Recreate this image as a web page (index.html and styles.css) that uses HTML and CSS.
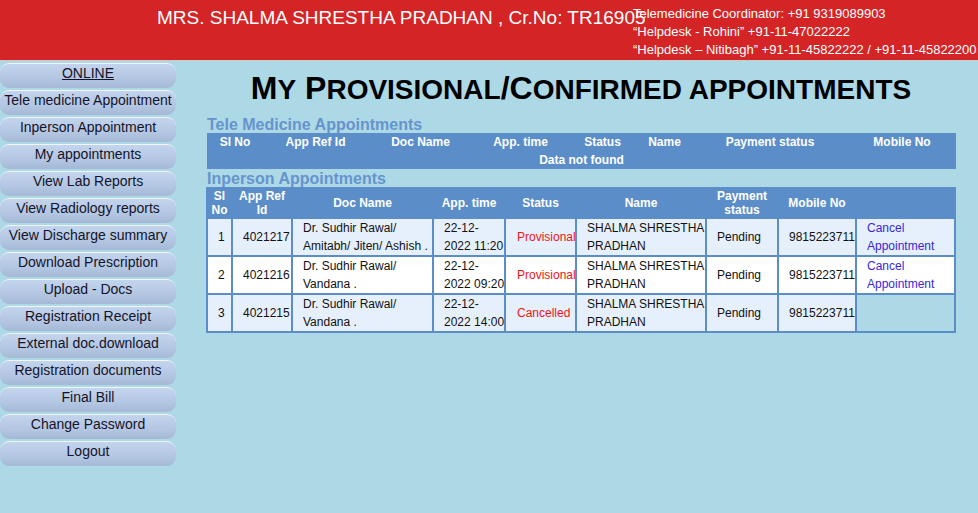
FILE: index.html
```
<!DOCTYPE html>
<html>
<head>
<meta charset="utf-8">
<title>My appointments</title>
<link rel="stylesheet" href="styles.css">
</head>
<body>
<header class="topbar">
  <div class="patient">MRS. SHALMA SHRESTHA PRADHAN , Cr.No: TR16905</div>
  <div class="contacts">Telemedicine Coordinator: +91 9319089903<br>“Helpdesk - Rohini” +91-11-47022222<br>“Helpdesk – Nitibagh” +91-11-45822222 / +91-11-45822200</div>
</header>
<div class="layout">
  <nav class="sidebar">
    <a class="navbtn navbtn-online" href="#">ONLINE</a>
    <a class="navbtn" href="#">Tele medicine Appointment</a>
    <a class="navbtn" href="#">Inperson Appointment</a>
    <a class="navbtn" href="#">My appointments</a>
    <a class="navbtn" href="#">View Lab Reports</a>
    <a class="navbtn" href="#">View Radiology reports</a>
    <a class="navbtn" href="#">View Discharge summary</a>
    <a class="navbtn" href="#">Download Prescription</a>
    <a class="navbtn" href="#">Upload - Docs</a>
    <a class="navbtn" href="#">Registration Receipt</a>
    <a class="navbtn" href="#">External doc.download</a>
    <a class="navbtn" href="#">Registration documents</a>
    <a class="navbtn" href="#">Final Bill</a>
    <a class="navbtn" href="#">Change Password</a>
    <a class="navbtn" href="#">Logout</a>
  </nav>
  <main class="content">
    <h1 class="title">M<span class="sc">y</span> P<span class="sc">rovisional</span>/C<span class="sc">onfirmed appointments</span></h1>
    <h2 class="section">Tele Medicine Appointments</h2>
    <table class="tele">
      <colgroup>
        <col class="t1"><col class="t2"><col class="t3"><col class="t4"><col class="t5"><col class="t6"><col class="t7"><col class="t8">
      </colgroup>
      <tr>
        <th>Sl No</th><th>App Ref Id</th><th>Doc Name</th><th>App. time</th><th>Status</th><th>Name</th><th>Payment status</th><th>Mobile No</th>
      </tr>
      <tr>
        <td colspan="8">Data not found</td>
      </tr>
    </table>
    <h2 class="section section-inperson">Inperson Appointments</h2>
    <table class="appts">
      <colgroup>
        <col class="c1"><col class="c2"><col class="c3"><col class="c4"><col class="c5"><col class="c6"><col class="c7"><col class="c8"><col class="c9">
      </colgroup>
      <tr class="head">
        <th>Sl No</th><th>App Ref Id</th><th>Doc Name</th><th>App. time</th><th>Status</th><th>Name</th><th>Payment status</th><th>Mobile No</th><th></th>
      </tr>
      <tr class="odd">
        <td>1</td><td>4021217</td><td>Dr. Sudhir Rawal/<br>Amitabh/ Jiten/ Ashish .</td><td>22-12-<br>2022 11:20</td><td class="st">Provisional</td><td>SHALMA SHRESTHA<br>PRADHAN</td><td>Pending</td><td>9815223711</td><td><a class="cancel" href="#">Cancel<br>Appointment</a></td>
      </tr>
      <tr class="even">
        <td>2</td><td>4021216</td><td>Dr. Sudhir Rawal/<br>Vandana .</td><td>22-12-<br>2022 09:20</td><td class="st">Provisional</td><td>SHALMA SHRESTHA<br>PRADHAN</td><td>Pending</td><td>9815223711</td><td><a class="cancel" href="#">Cancel<br>Appointment</a></td>
      </tr>
      <tr class="odd">
        <td>3</td><td>4021215</td><td>Dr. Sudhir Rawal/<br>Vandana .</td><td>22-12-<br>2022 14:00</td><td class="st">Cancelled</td><td>SHALMA SHRESTHA<br>PRADHAN</td><td>Pending</td><td>9815223711</td><td class="empty"></td>
      </tr>
    </table>
  </main>
</div>
</body>
</html>
```
FILE: styles.css
```
* { box-sizing: border-box; }
html, body { margin: 0; padding: 0; }
body {
  background: #add8e6;
  font-family: "Liberation Sans", Arial, sans-serif;
  color: #000;
  height: 513px;
  overflow: hidden;
}

.topbar {
  position: relative;
  height: 61px;
  background: #d42426;
  border-bottom: 1px solid #c9c9c9;
  color: #fff;
}
.patient {
  padding: 7px 0 0 157px;
  font-size: 19px;
  line-height: 22px;
  white-space: nowrap;
}
.contacts {
  position: absolute;
  left: 633px;
  top: 5px;
  font-size: 13px;
  line-height: 18px;
  white-space: nowrap;
}

.layout {
  display: flex;
  align-items: flex-start;
}
.sidebar {
  width: 176px;
  flex: none;
  display: flex;
  flex-direction: column;
  gap: 2px;
  margin-top: 2px;
}
.navbtn {
  display: block;
  height: 25px;
  line-height: 18px;
  text-align: center;
  font-size: 14px;
  color: #141428;
  text-decoration: none;
  white-space: nowrap;
  border-radius: 9px;
  border-top: 1px solid #f2f6fb;
  background: linear-gradient(#c3d4ed, #b3c6e2 60%, #a5b9d6);
}
.navbtn-online { text-decoration: underline; }

.content {
  padding-left: 30px;
  width: 780px;
}
.title {
  margin: 10px 0 0 0;
  width: 750px;
  height: 34px;
  text-align: center;
  font-size: 32px;
  line-height: 34px;
  font-weight: bold;
  white-space: nowrap;
}
.title .sc {
  font-size: 28px;
  line-height: 1;
  text-transform: uppercase;
}
.section {
  margin: 12px 0 0 1px;
  font-size: 16px;
  line-height: 16px;
  font-weight: bold;
  color: #6594cd;
}
.section-inperson { margin-top: 2px; }

table {
  border-spacing: 0;
  table-layout: fixed;
  font-size: 12px;
}
.tele {
  width: 749px;
  margin-left: 1px;
  background: #5b8ec9;
  color: #fff;
  font-weight: bold;
}
.tele th, .tele td {
  padding: 0;
  height: 18px;
  line-height: 18px;
  text-align: center;
  white-space: nowrap;
}
.t1 { width: 56px; } .t2 { width: 105px; } .t3 { width: 105px; } .t4 { width: 95px; }
.t5 { width: 69px; } .t6 { width: 55px; } .t7 { width: 156px; } .t8 { width: 108px; }

.appts {
  width: 750px;
  border: 1px solid #5b8ec9;
}
.c1 { width: 25px; } .c2 { width: 60px; } .c3 { width: 141px; } .c4 { width: 72px; }
.c5 { width: 71px; } .c6 { width: 130px; } .c7 { width: 72px; } .c8 { width: 78px; } .c9 { width: 99px; }
.appts th, .appts td {
  border: 1px solid #5b8ec9;
  white-space: nowrap;
  overflow: visible;
}
.appts th {
  background: #5b8ec9;
  color: #fff;
  font-weight: bold;
  line-height: 14px;
  height: 30px;
  padding: 0;
  text-align: center;
  white-space: normal;
}
.appts td {
  height: 38px;
  line-height: 18px;
  padding: 0 0 0 10px;
  text-align: left;
  color: #111;
}
.appts .odd td { background: #e6f0fc; }
.appts .even td { background: #fff; }
.appts .odd td.empty { background: transparent; }
.appts td.st { color: #f21414; padding-left: 11px; }
.cancel { color: #3a1fdc; text-decoration: none; }
```
